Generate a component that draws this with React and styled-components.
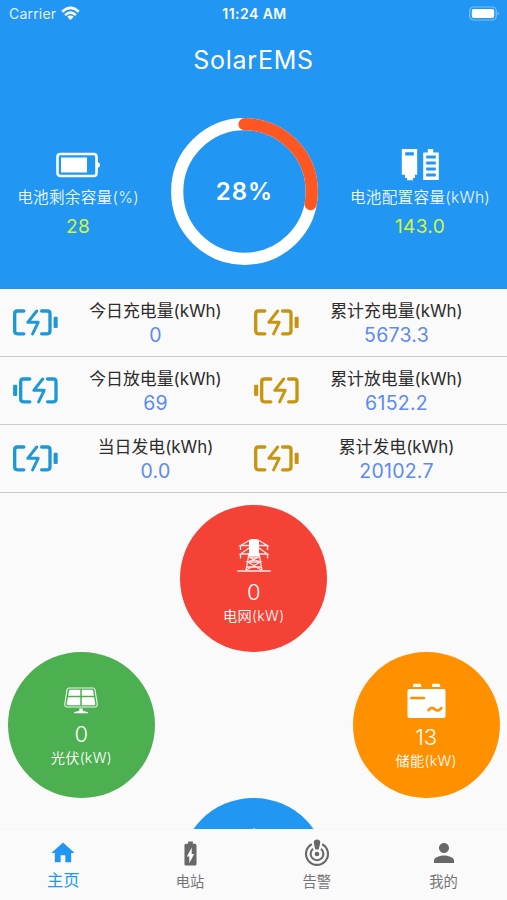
import React from "react";
import styled, { createGlobalStyle } from "styled-components";
import { MdHome, MdBatteryChargingFull, MdPerson } from "react-icons/md";

const GlobalStyle = createGlobalStyle`
  * { box-sizing: border-box; }
  body {
    margin: 0;
    background: #fafafa;
    font-family: Inter, "Noto Sans CJK SC", sans-serif;
  }
  svg { display: block; flex: none; }
`;

const Screen = styled.div`
  width: 507px;
  height: 900px;
  display: flex;
  flex-direction: column;
  overflow: hidden;
  background: #fafafa;
`;

const Header = styled.header`
  height: 289px;
  flex: none;
  background: #2196f3;
  color: #fff;
`;

const StatusBar = styled.div`
  height: 27px;
  display: grid;
  grid-template-columns: 1fr auto 1fr;
  align-items: center;
  padding: 0 7px 0 9px;
`;

const Carrier = styled.div`
  display: flex;
  align-items: center;
  gap: 5px;
  font-size: 14px;
  letter-spacing: 0.2px;
  color: #e3f1fd;
`;

const Clock = styled.div`
  font-size: 14px;
  font-weight: 600;
  letter-spacing: 0.45px;
`;

const BatteryStatus = styled.div`
  display: flex;
  justify-content: flex-end;
`;

const Title = styled.h1`
  margin: 0;
  height: 65px;
  line-height: 66px;
  text-align: center;
  font-size: 25px;
  font-weight: 400;
  letter-spacing: 0.75px;
`;

const Summary = styled.div`
  display: grid;
  grid-template-columns: 156px 177px 174px;
  height: 197px;
`;

const Capacity = styled.div`
  display: flex;
  flex-direction: column;
  align-items: center;
  padding-top: 55px;
`;

const CapacityIcon = styled.div`
  height: 36px;
  display: flex;
  align-items: center;
`;

const CapacityLabel = styled.div`
  margin-top: 2px;
  height: 26px;
  line-height: 25px;
  font-size: 15.6px;
  font-weight: 350;
  letter-spacing: 0.3px;
  white-space: nowrap;
  color: #f0f8ff;
`;

const CapacityValue = styled.div`
  height: 30px;
  line-height: 31px;
  font-size: 19px;
  letter-spacing: 0.35px;
  color: #d4f53c;
`;

const Gauge = styled.div`
  display: grid;
  place-items: center;
  padding-top: 26px;
  height: 173px;

  & > * { grid-area: 1 / 1; }
`;

const GaugeValue = styled.div`
  font-size: 24px;
  font-weight: 600;
  letter-spacing: 1px;
`;

const StatRow = styled.section`
  height: 68px;
  flex: none;
  display: grid;
  grid-template-columns: 70px 171px 70px 171px;
  border-bottom: 1.5px solid #cbcbcb;
`;

const StatIcon = styled.div`
  display: grid;
  place-items: center;
`;

const Stat = styled.div`
  display: flex;
  flex-direction: column;
  align-items: center;
  padding-top: 10px;
`;

const StatLabel = styled.div`
  height: 24px;
  line-height: 24px;
  font-size: 16.9px;
  letter-spacing: -0.02px;
  white-space: nowrap;
  color: #2c2c2c;
`;

const StatValue = styled.div`
  height: 24px;
  line-height: 24px;
  font-size: 19.5px;
  letter-spacing: 0.25px;
  color: #5c8af2;
`;

const Flow = styled.main`
  height: 336px;
  flex: none;
  padding: 12px 7.5px 0 8px;
  overflow: hidden;
`;

const FlowRow = styled.div`
  display: flex;
  justify-content: ${(p) => (p.$split ? "space-between" : "center")};
`;

const Circle = styled.div`
  width: 146.6px;
  height: 146.6px;
  border-radius: 50%;
  background: ${(p) => p.$color};
  color: #fff;
  display: flex;
  flex-direction: column;
  align-items: center;
  padding-top: ${(p) => p.$top}px;
`;

const CircleValue = styled.div`
  height: 27px;
  line-height: 27px;
  margin-top: 6px;
  font-size: 22px;
  font-weight: 350;
`;

const CircleLabel = styled.div`
  height: 20px;
  line-height: 19px;
  font-size: 14.2px;
  font-weight: 350;
  letter-spacing: 0.3px;
`;

const TabBar = styled.nav`
  height: 71px;
  flex: none;
  display: grid;
  grid-template-columns: repeat(4, 1fr);
  border-top: 1px solid #f6f6f6;
`;

const Tab = styled.div`
  display: flex;
  flex-direction: column;
  align-items: center;
  padding-top: 8px;
  color: ${(p) => (p.$active ? "#2196f3" : "#757575")};
`;

const TabIcon = styled.div`
  height: 30px;
  display: grid;
  place-items: center;
  color: ${(p) => (p.$active ? "#2196f3" : "#686868")};
`;

const TabLabel = styled.div`
  height: 26px;
  line-height: ${(p) => (p.$active ? 24 : 27)}px;
  font-size: ${(p) => (p.$active ? 16.3 : 14.3)}px;
`;

const WifiIcon = () => (
  <svg width="19" height="15" viewBox="0 0 19 15" fill="none" stroke="#fff" strokeWidth="2.6">
    <path d="M1.2 5.7Q9.5-2.1 17.8 5.7" />
    <path d="M4.1 9.1Q9.5 4 14.9 9.1" />
    <path d="M9.5 14L6.3 10.8Q9.5 8.4 12.7 10.8Z" fill="#fff" stroke="none" />
  </svg>
);

const PhoneBattery = () => (
  <svg width="31" height="15" viewBox="0 0 31 15">
    <rect x="0.7" y="1" width="26.5" height="13" rx="3.8" fill="none" stroke="#7dc0f8" strokeWidth="1.2" />
    <rect x="2.8" y="3" width="22.4" height="9" rx="2" fill="#fff" />
    <path d="M28.6 5.2Q31.2 7.5 28.6 9.8Z" fill="#7dc0f8" />
  </svg>
);

const RemainingIcon = () => (
  <svg width="44" height="26" viewBox="0 0 44 26">
    <rect x="1.5" y="2" width="39" height="22" rx="2.8" fill="none" stroke="#fff" strokeWidth="2.6" />
    <rect x="5" y="5.5" width="26" height="15" fill="#fff" />
    <path d="M41 9.5L43.8 11.5V14.5L41 16.5Z" fill="#fff" />
  </svg>
);

const ConfiguredIcon = () => (
  <svg width="38" height="34" viewBox="0 0 38 34">
    <path fillRule="evenodd" fill="#fff" d="M.8 1h15.4v25.8h-2.2v3.2h-2v2.3H6v-2.3H4v-3.2H.8zM4.2 4.2v3.3h8.6V4.2z" />
    <path fillRule="evenodd" fill="#fff" d="M26.8 1h5.4v3.4h5.6V32H22.2V4.4h4.6zM25.2 7.4v3.1h9.6V7.4zm0 6v3.1h9.6v-3.1zm0 6v3.1h9.6v-3.1zm0 6v3.1h9.6v-3.1z" />
  </svg>
);

const ChargeIcon = ({ color, discharge }) => (
  <svg width="45" height="27" viewBox="0 0 45 26" fill="none" stroke={color} strokeWidth="3.3" strokeLinecap="round" strokeLinejoin="round">
    <g transform={discharge ? "translate(6 0)" : undefined}>
      <path d="M10.8 1.5H4.4Q1.7 1.5 1.7 4.2V21.6Q1.7 24.3 4.4 24.3H10.8" />
      <path d="M28.6 1.5H34.3Q37 1.5 37 4.2V21.6Q37 24.3 34.3 24.3H28.6" />
      <path d="M23.7 1.5L14.8 12.8H25.2L19.6 24.4" strokeWidth="2.9" />
    </g>
    <rect x={discharge ? 0.1 : 40.6} y="7.3" width="4.1" height="11.2" rx="1" fill={color} stroke="none" />
  </svg>
);

const PylonIcon = () => (
  <svg width="34" height="35" viewBox="0 0 34 35" fill="none" stroke="#ffe7e4" strokeWidth="1.3">
    <path d="M13 2L3.5 7.5H30.5L21 2M12 10L3.5 16H30.5L22 10M3.5 7V12M30.5 7V12M3.5 16V20.5M30.5 16V20.5" />
    <path d="M12 15L9 32.5M22 15L25 32.5M11.5 19H22.5M10.7 24H23.3L9.5 32M23.3 24H10.7L24.5 32M11.5 19L23.3 24M22.5 19L10.7 24M10 29H24" />
    <path d="M12 3L14 1H20L22 3V18H12Z" fill="#fff" stroke="none" />
    <path d="M0.3 33H33.7" strokeWidth="1.5" />
  </svg>
);

const PanelIcon = () => (
  <svg width="34" height="28" viewBox="0 0 34 28">
    <path d="M5 1H29Q30.5 1 31 2.6L33.2 16.8Q33.6 20 30.8 20H3.2Q.4 20 .8 16.8L3 2.6Q3.5 1 5 1Z" fill="none" stroke="#eaf6ea" strokeWidth="1.1" />
    <path d="M6 2.7H16.3V8.8H4.2L5 3.8Q5.2 2.7 6 2.7ZM17.8 2.7H28Q28.9 2.7 29.1 3.8L29.9 8.8H17.8ZM4 10.2H16.3V18.3H3.8Q2.5 18.3 2.7 16.8ZM17.8 10.2H30.1L31.3 16.8Q31.5 18.3 30.2 18.3H17.8Z" fill="#fff" />
    <path d="M15.3 21.5H18.7V23.7L24 25.3V26.3H10V25.3L15.3 23.7Z" fill="#fff" />
  </svg>
);

const StorageIcon = () => (
  <svg width="39" height="35" viewBox="0 0 39 35">
    <path d="M6 4V2Q6 .8 7.2 .8H13Q14.2 .8 14.2 2V4ZM25 4V2Q25 .8 26.2 .8H32Q33.2 .8 33.2 2V4Z" fill="#fff" />
    <rect x="0.5" y="6" width="38" height="29" rx="2" fill="#fff" />
    <path d="M4.3 15H17M21.5 27.2Q24.5 23 28 26.5Q31.5 29 34.3 25" fill="none" stroke="#ff9100" strokeWidth="2.6" strokeLinecap="round" />
  </svg>
);

const LoadIcon = () => (
  <svg width="34" height="34" viewBox="0 0 34 34">
    <path d="M17 0L34 16H29V34H5V16H0Z" fill="#fff" />
  </svg>
);

const AlarmIcon = () => (
  <svg width="26" height="28" viewBox="0 0 26 28" fill="none" stroke="currentColor" strokeWidth="2.1">
    <path d="M7.8 5.2A11 11 0 1 0 18.2 5.2" />
    <path d="M9 9.8A6.4 6.4 0 1 0 17 9.8" />
    <circle cx="13" cy="15" r="2.3" fill="currentColor" stroke="none" />
    <path d="M9.8 3.4Q9.8 .4 13 .4T16.2 3.4Q16.2 5 14.6 10.5H11.4Q9.8 5 9.8 3.4Z" fill="currentColor" stroke="none" />
  </svg>
);

const stats = [
  ["今日充电量(kWh)", "0", "累计充电量(kWh)", "5673.3", false],
  ["今日放电量(kWh)", "69", "累计放电量(kWh)", "6152.2", true],
  ["当日发电(kWh)", "0.0", "累计发电(kWh)", "20102.7", false],
];

const tabs = [
  { label: "主页", icon: <MdHome size={28} />, active: true },
  { label: "电站", icon: <MdBatteryChargingFull size={29} /> },
  { label: "告警", icon: <AlarmIcon /> },
  { label: "我的", icon: <MdPerson size={30} /> },
];

const Node = ({ color, top, icon, value, label }) => (
  <Circle $color={color} $top={top}>
    {icon}
    {value && <CircleValue>{value}</CircleValue>}
    {label && <CircleLabel>{label}</CircleLabel>}
  </Circle>
);

export default function App() {
  return (
    <Screen>
      <GlobalStyle />
      <Header>
        <StatusBar>
          <Carrier>Carrier<WifiIcon /></Carrier>
          <Clock>11:24 AM</Clock>
          <BatteryStatus><PhoneBattery /></BatteryStatus>
        </StatusBar>
        <Title>SolarEMS</Title>
        <Summary>
          <Capacity>
            <CapacityIcon><RemainingIcon /></CapacityIcon>
            <CapacityLabel>电池剩余容量(%)</CapacityLabel>
            <CapacityValue>28</CapacityValue>
          </Capacity>
          <Gauge>
            <svg width="147" height="147" viewBox="0 0 147 147" fill="none" strokeWidth="12.2">
              <circle cx="73.5" cy="73.5" r="67.3" stroke="#fff" />
              <circle cx="73.5" cy="73.5" r="67.3" stroke="#ff5722" strokeLinecap="round" pathLength="100" strokeDasharray="28 100" transform="rotate(-90 73.5 73.5)" />
            </svg>
            <GaugeValue>28%</GaugeValue>
          </Gauge>
          <Capacity>
            <CapacityIcon><ConfiguredIcon /></CapacityIcon>
            <CapacityLabel>电池配置容量(kWh)</CapacityLabel>
            <CapacityValue>143.0</CapacityValue>
          </Capacity>
        </Summary>
      </Header>

      {stats.map(([dayLabel, day, totalLabel, total, discharge]) => (
        <StatRow key={dayLabel}>
          <StatIcon><ChargeIcon color="#1a98d8" discharge={discharge} /></StatIcon>
          <Stat>
            <StatLabel>{dayLabel}</StatLabel>
            <StatValue>{day}</StatValue>
          </Stat>
          <StatIcon><ChargeIcon color="#c9940d" discharge={discharge} /></StatIcon>
          <Stat>
            <StatLabel>{totalLabel}</StatLabel>
            <StatValue>{total}</StatValue>
          </Stat>
        </StatRow>
      ))}

      <Flow>
        <FlowRow>
          <Node color="#f44336" top={33} icon={<PylonIcon />} value="0" label="电网(kW)" />
        </FlowRow>
        <FlowRow $split>
          <Node color="#4caf50" top={35} icon={<PanelIcon />} value="0" label="光伏(kW)" />
          <Node color="#ff9100" top={31} icon={<StorageIcon />} value="13" label="储能(kW)" />
        </FlowRow>
        <FlowRow>
          <Node color="#2196f3" top={30} icon={<LoadIcon />} />
        </FlowRow>
      </Flow>

      <TabBar>
        {tabs.map((t) => (
          <Tab key={t.label} $active={t.active}>
            <TabIcon $active={t.active}>{t.icon}</TabIcon>
            <TabLabel $active={t.active}>{t.label}</TabLabel>
          </Tab>
        ))}
      </TabBar>
    </Screen>
  );
}
